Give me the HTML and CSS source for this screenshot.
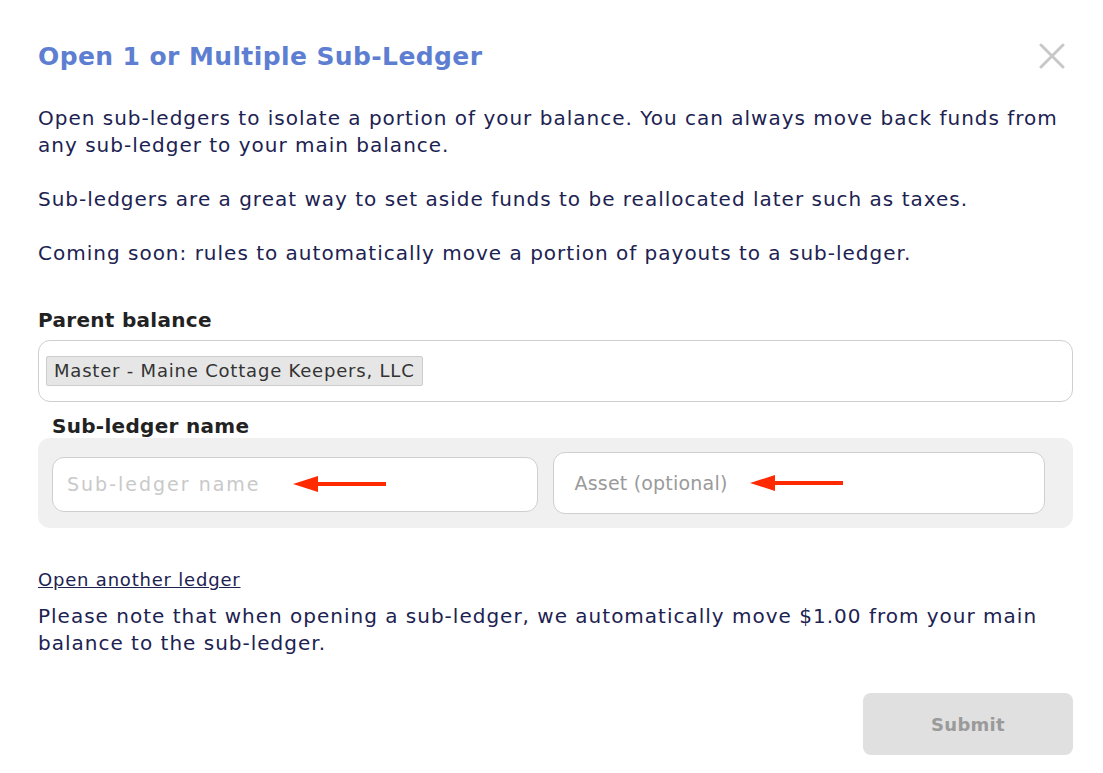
FILE: index.html
```html
<html>
  <head>
    <title>Open Sub-Ledger</title>
    <link rel="stylesheet" href="styles.css">
  </head>
  <body>
    <div class="modal">
      <div class="modal-header">
        <h2 class="title">Open 1 or Multiple Sub-Ledger</h2>
        <button class="close" type="button" aria-label="Close">
          <svg width="26" height="26" viewBox="0 0 26 26">
            <path d="M2 2 L24 24 M24 2 L2 24" stroke="#c8c8c8" stroke-width="3" stroke-linecap="round" />
          </svg>
        </button>
      </div>

      <p class="text">Open sub-ledgers to isolate a portion of your balance. You can always move back funds from any sub-ledger to your main balance.</p>
      <p class="text">Sub-ledgers are a great way to set aside funds to be reallocated later such as taxes.</p>
      <p class="text">Coming soon: rules to automatically move a portion of payouts to a sub-ledger.</p>

      <label class="label">Parent balance</label>
      <div class="select">
        <span class="chip">Master - Maine Cottage Keepers, LLC</span>
      </div>

      <label class="label sub-label">Sub-ledger name</label>
      <div class="ledger-row">
        <div class="field field-name">
          <span class="placeholder light">Sub-ledger name</span>
          <svg class="arrow" width="94" height="18" viewBox="0 0 94 18">
            <path d="M22 9 H93" stroke="#ff2a00" stroke-width="4" />
            <polygon points="0,9 25,1 25,17" fill="#ff2a00" />
          </svg>
        </div>
        <div class="field field-asset">
          <span class="placeholder">Asset (optional)</span>
          <svg class="arrow" width="94" height="18" viewBox="0 0 94 18">
            <path d="M22 9 H93" stroke="#ff2a00" stroke-width="4" />
            <polygon points="0,9 25,1 25,17" fill="#ff2a00" />
          </svg>
        </div>
      </div>

      <a class="link" href="#">Open another ledger</a>
      <p class="text note">Please note that when opening a sub-ledger, we automatically move $1.00 from your main balance to the sub-ledger.</p>

      <div class="footer">
        <button class="submit" type="button" disabled>Submit</button>
      </div>
    </div>
  </body>
</html>
```

FILE: styles.css
```css
body {
  margin: 0;
  background: #fff;
  font-family: "DejaVu Sans", "Noto Sans", sans-serif;
  color: #1c2251;
}

.modal {
  width: 1035px;
  padding: 38px 0 0 38px;
}

.modal-header {
  display: flex;
  justify-content: space-between;
  align-items: center;
  height: 36px;
}

.title {
  margin: 0;
  font-size: 25px;
  font-weight: bold;
  letter-spacing: 0.4px;
  color: #5e7fd1;
}

.close {
  background: none;
  border: none;
  padding: 0;
  margin-right: 8px;
  display: flex;
}

.text {
  margin: 31px 0 0;
  font-size: 20px;
  line-height: 27px;
  letter-spacing: 1px;
}

.text + .text {
  margin-top: 27px;
}

.label {
  display: block;
  margin-top: 41px;
  font-size: 20px;
  font-weight: bold;
  letter-spacing: 0.3px;
  color: #222;
  line-height: 24px;
}

.select {
  margin-top: 8px;
  height: 60px;
  border: 1px solid #cfcfcf;
  border-radius: 12px;
  display: flex;
  align-items: center;
  padding-left: 7px;
}

.chip {
  background: #e6e6e6;
  border: 1px solid #cdcdcd;
  border-radius: 2px;
  padding: 3px 7px;
  font-size: 18px;
  letter-spacing: 0.8px;
  line-height: 22px;
  color: #333;
}

.sub-label {
  margin-top: 12px;
  margin-left: 14px;
}

.ledger-row {
  background: #f0f0f0;
  border-radius: 12px;
  height: 90px;
  display: flex;
  align-items: center;
  gap: 15px;
  padding: 0 28px 0 14px;
}

.field {
  flex: 1;
  min-width: 0;
  box-sizing: border-box;
  background: #fff;
  border: 1px solid #cfcfcf;
  border-radius: 12px;
  display: flex;
  align-items: center;
  font-size: 19px;
}

.field-name {
  height: 55px;
  padding-left: 14px;
  margin-top: 2px;
  gap: 32px;
  letter-spacing: 2px;
}

.field-asset {
  height: 62px;
  padding-left: 21px;
  gap: 22px;
  letter-spacing: 0.2px;
}

.placeholder {
  color: #9a9a9a;
}

.placeholder.light {
  color: #c9c9c9;
}

.link {
  display: inline-block;
  margin-top: 41px;
  font-size: 18px;
  letter-spacing: 0.8px;
  color: #1c2251;
}

.note {
  margin-top: 13px;
}

.footer {
  display: flex;
  justify-content: flex-end;
  margin-top: 36px;
}

.submit {
  width: 210px;
  height: 62px;
  border: none;
  border-radius: 8px;
  background: #e0e0e0;
  color: #9a9a9a;
  font-family: inherit;
  font-size: 18px;
  font-weight: bold;
  letter-spacing: 0.3px;
}
```
